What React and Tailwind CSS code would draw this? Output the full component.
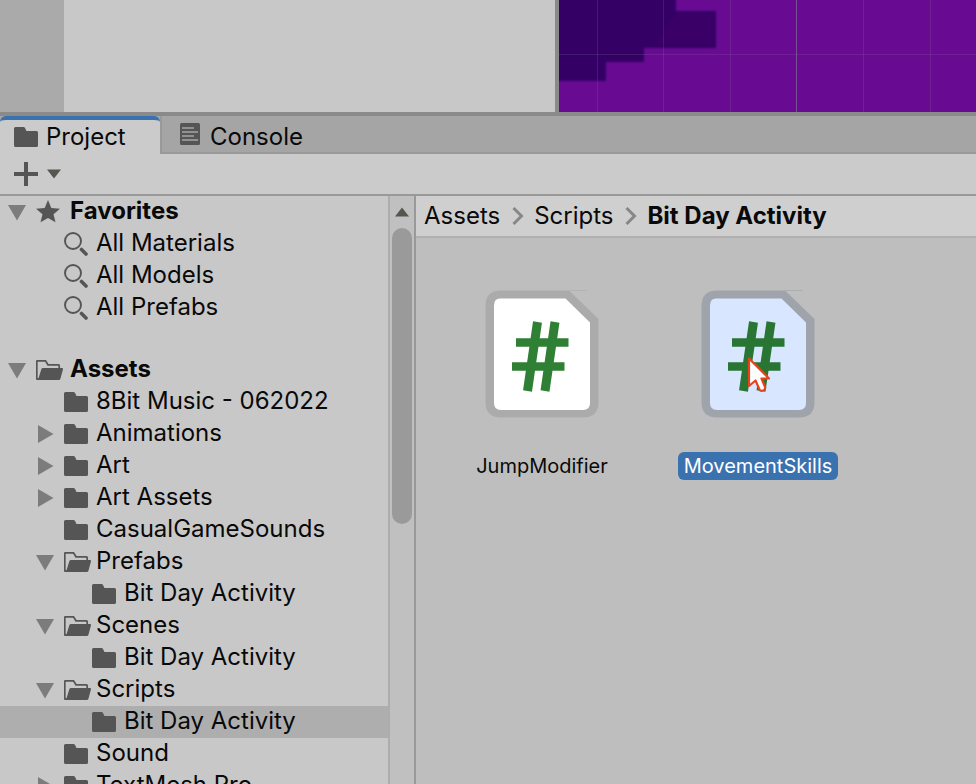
import { useState } from "react";

const FAVORITES = ["All Materials", "All Models", "All Prefabs"];

const ASSETS = [
  { name: "8Bit Music - 062022", depth: 1 },
  { name: "Animations", depth: 1, state: "closed" },
  { name: "Art", depth: 1, state: "closed" },
  { name: "Art Assets", depth: 1, state: "closed" },
  { name: "CasualGameSounds", depth: 1 },
  { name: "Prefabs", depth: 1, state: "open" },
  { name: "Bit Day Activity", depth: 2 },
  { name: "Scenes", depth: 1, state: "open" },
  { name: "Bit Day Activity", depth: 2 },
  { name: "Scripts", depth: 1, state: "open" },
  { name: "Bit Day Activity", depth: 2, selected: true },
  { name: "Sound", depth: 1 },
  { name: "TextMesh Pro", depth: 1, state: "closed" },
];

function FolderIcon() {
  return (
    <svg className="h-5 w-6 shrink-0" viewBox="0 0 24 20" fill="#555555" aria-hidden="true">
      <path d="M1.500 0H9.500Q10.500 0 11 1L12.500 4H22.500Q24 4 24 5.500V18.500Q24 20 22.500 20H1.500Q0 20 0 18.500V1.500Q0 0 1.500 0Z" />
    </svg>
  );
}

function OpenFolderIcon() {
  return (
    <svg className="h-5 w-7 shrink-0" viewBox="0 0 28 20" fill="#555555" aria-hidden="true">
      <path
        d="M23.200 8V5.500Q23.200 4.800 22.500 4.800H12L9.500 0.800H1.500Q0.800 0.800 0.800 1.500V18.500Q0.800 19.200 1.500 19.200H3"
        fill="none"
        stroke="#555555"
        strokeWidth="1.700"
      />
      <path d="M7 8H26Q27.300 8 27 9.200L24.500 18.500Q24.100 20 22.600 20H2L5.300 9.200Q5.700 8 7 8Z" />
    </svg>
  );
}

function SearchIcon() {
  return (
    <svg className="h-6 w-6 shrink-0" viewBox="0 0 24 24" fill="none" stroke="#555555" aria-hidden="true">
      <circle cx="9" cy="9" r="8" strokeWidth="1.900" />
      <path d="M17.500 17.500L22 22" strokeWidth="3.600" strokeLinecap="round" />
    </svg>
  );
}

function StarIcon() {
  return (
    <svg className="h-6 w-6 shrink-0" viewBox="0 0 24 24" fill="#555555" aria-hidden="true">
      <path d="M12 0L15.300 8L24 8.800L17.500 14.200L19.500 22.200L12 18L4.500 22.200L6.500 14.200L0 8.800L8.700 8Z" />
    </svg>
  );
}

function Arrow({ state }) {
  return (
    <svg className="h-5 w-5 shrink-0" viewBox="0 0 20 20" fill="#7c7c7c" aria-hidden="true">
      {state === "open" && <path d="M1 3H19L10 18.500Z" />}
      {state === "closed" && <path d="M3 1L18.500 10L3 19Z" />}
    </svg>
  );
}

function Toggle({ state, label }) {
  if (!state) return <span className="w-5 shrink-0" />;
  return (
    <button type="button" aria-label={label} aria-expanded={state === "open"} className="shrink-0">
      <Arrow state={state} />
    </button>
  );
}

function TreeRow({ name, depth, state, selected, icon, bold }) {
  const indent = depth === 0 ? "pl-[7px]" : depth === 1 ? "pl-[35px]" : "pl-[63px]";
  return (
    <li
      className={`flex h-8 shrink-0 items-center ${indent} ${selected ? "bg-[#aeaeae]" : ""}`}
    >
      <Toggle state={state} label={`Toggle ${name}`} />
      <span className="ml-[9px] flex w-8 shrink-0 items-center">{icon}</span>
      <button
        type="button"
        className={`pb-[2px] text-2xl leading-[30px] whitespace-nowrap ${bold ? "ml-[2px] font-bold" : ""}`}
      >
        {name}
      </button>
    </li>
  );
}

function SceneView() {
  return (
    <svg
      className="h-full w-full"
      viewBox="0 0 417 112"
      preserveAspectRatio="xMinYMin slice"
      role="img"
      aria-label="Scene view"
    >
      <defs>
        <filter id="soft" x="-5%" y="-5%" width="110%" height="110%">
          <feGaussianBlur stdDeviation="1" />
        </filter>
      </defs>
      <rect width="417" height="112" fill="#690a93" />
      <path
        d="M-9 -9H117V11H157V48H85V62H47V81H-9Z"
        fill="#340066"
        filter="url(#soft)"
      />
      <path d="M117 14H154V44H98Z" fill="#410068" opacity="0.600" filter="url(#soft)" />
      <g stroke="#80808c" strokeOpacity="0.200">
        <path d="M38.500 0V112M104.500 0V112M171.500 0V112M304.500 0V112M371.500 0V112M0 54.500H417" />
        <path d="M237.500 0V112" strokeOpacity="0.600" />
      </g>
    </svg>
  );
}

function ScriptIcon({ selected }) {
  const frame = selected ? "#9fa4ac" : "#ababab";
  const paper = selected ? "#d8e6ff" : "#ffffff";
  const ink = selected ? "#297534" : "#2f8034";
  return (
    <svg className="h-32 w-[114px]" viewBox="0 0 114 128" aria-hidden="true">
      <path d="M16 0.500H84L113.500 29V112Q113.500 127.500 98 127.500H16Q0.500 127.500 0.500 112V16Q0.500 0.500 16 0.500Z" fill={frame} />
      <path d="M84 0.500H102" stroke={frame} strokeOpacity="0.600" />
      <path d="M15 8.500H80.500L105 32.500V113Q105 120 98 120H16Q9 120 9 113V15.500Q9 8.500 15 8.500Z" fill={paper} />
      <g stroke={ink} fill="none">
        <path d="M52.500 32L42.500 101M70 32L60 101" strokeWidth="9" />
        <path d="M31 52.500H83.500M27 76.500H79.500" strokeWidth="8.500" />
      </g>
    </svg>
  );
}

function Cursor() {
  return (
    <svg className="absolute top-[65px] left-[45px] h-10 w-7" viewBox="0 0 28 40" aria-hidden="true">
      <path
        d="M3 3.500V31L9.500 25.500L13.500 34.500Q14.500 36.500 17 35.500Q19.800 34.500 19 32L15.500 23.500H23Z"
        fill="#ffffff"
        stroke="#e8421c"
        strokeWidth="2.200"
        strokeLinejoin="round"
      />
    </svg>
  );
}

function Chevron() {
  return (
    <svg className="h-5 w-3 shrink-0" viewBox="0 0 12 20" fill="none" stroke="#878787" strokeWidth="3" aria-hidden="true">
      <path d="M1.500 2L9.500 10L1.500 18" />
    </svg>
  );
}

function ScriptTile({ name, selected, onSelect, children }) {
  return (
    <button type="button" onClick={onSelect} className="flex w-[216px] flex-col items-center">
      <span className="relative flex">
        <ScriptIcon selected={selected} />
        {children}
      </span>
      <span
        className={`mt-[34px] rounded-md px-1.5 text-xl leading-7 ${selected ? "bg-[#3a72b0] text-white" : ""}`}
      >
        {name}
      </span>
    </button>
  );
}

export default function App() {
  const [picked, setPicked] = useState("MovementSkills");
  return (
    <div className="flex h-screen flex-col overflow-hidden bg-[#bebebe] font-['Inter','Liberation_Sans',sans-serif] text-[#090909]">
      <section className="flex h-[116px] shrink-0 border-b-4 border-[#8a8a8a]">
        <div className="w-16 shrink-0 bg-[#aaaaaa]" />
        <div className="w-[495px] shrink-0 border-r-4 border-[#8a8a8a] bg-[#c8c8c8]" />
        <div className="min-w-0 flex-1">
          <SceneView />
        </div>
      </section>

      <nav className="flex h-[38px] shrink-0 bg-[#a5a5a5] text-2xl">
        <button
          type="button"
          className="flex w-40 shrink-0 items-center gap-2 rounded-t-md border-t-4 border-[#3a72b0] bg-[#cbcbcb] pl-3.5"
        >
          <FolderIcon />
          Project
        </button>
        <button
          type="button"
          className="flex flex-1 items-center gap-2.5 border-b-2 border-l-2 border-[#999999] pt-1 pl-[18px]"
        >
          <svg className="mb-1 h-[22px] w-5 shrink-0" viewBox="0 0 20 22" aria-hidden="true">
            <rect width="20" height="22" rx="1.500" fill="#555555" />
            <path d="M2 5H14M2 9H18M2 13H14M2 17H18" stroke="#a5a5a5" strokeWidth="1.700" />
          </svg>
          <span className="pt-0.5">Console</span>
        </button>
      </nav>

      <div className="flex h-[42px] shrink-0 items-center border-b-2 border-[#999999] bg-[#cbcbcb] pl-3.5">
        <button type="button" aria-label="Create" className="flex items-center gap-[9px]">
          <svg className="h-6 w-6" viewBox="0 0 24 24" aria-hidden="true">
            <path d="M12 0V24M0 12H24" stroke="#555555" strokeWidth="4" />
          </svg>
          <svg className="h-2.5 w-3.5" viewBox="0 0 14 10" fill="#55564e" aria-hidden="true">
            <path d="M0 0.500H14L7 9.500Z" />
          </svg>
        </button>
      </div>

      <main className="flex min-h-0 flex-1">
        <ul className="flex w-[388px] shrink-0 flex-col overflow-hidden bg-[#c8c8c8]">
          <TreeRow name="Favorites" depth={0} state="open" bold icon={<StarIcon />} />
          {FAVORITES.map((name) => (
            <TreeRow key={name} name={name} depth={1} icon={<SearchIcon />} />
          ))}
          <li className="h-[30px] shrink-0" aria-hidden="true" />
          <TreeRow name="Assets" depth={0} state="open" bold icon={<OpenFolderIcon />} />
          {ASSETS.map((item, i) => (
            <TreeRow key={i} {...item} icon={item.state === "open" ? <OpenFolderIcon /> : <FolderIcon />} />
          ))}
        </ul>

        <div className="flex w-7 shrink-0 flex-col items-center border-x-2 border-l-[#adadad] border-r-[#999999] bg-[#c0c0c0]">
          <button type="button" aria-label="Scroll up" className="flex h-8 shrink-0 items-center">
            <svg className="h-2.5 w-3.5" viewBox="0 0 14 10" fill="#55564e" aria-hidden="true">
              <path d="M0 9.500H14L7 0.500Z" />
            </svg>
          </button>
          <div className="h-[296px] w-5 shrink-0 rounded-full bg-[#9a9a9a]" />
        </div>

        <section className="flex min-w-0 flex-1 flex-col">
          <div className="flex h-[42px] shrink-0 items-center border-b-2 border-[#b0b0b0] bg-[#cfcfcf] pl-2 text-2xl whitespace-nowrap">
            <button type="button">Assets</button>
            <span className="mr-2.5 ml-3 flex">
              <Chevron />
            </span>
            <button type="button">Scripts</button>
            <span className="mr-2.5 ml-3 flex">
              <Chevron />
            </span>
            <button type="button" className="font-bold">
              Bit Day Activity
            </button>
          </div>
          <div className="flex flex-wrap pt-[52px] pl-[18px]">
            <ScriptTile
              name="JumpModifier"
              selected={picked === "JumpModifier"}
              onSelect={() => setPicked("JumpModifier")}
            />
            <ScriptTile
              name="MovementSkills"
              selected={picked === "MovementSkills"}
              onSelect={() => setPicked("MovementSkills")}
            >
              <Cursor />
            </ScriptTile>
          </div>
        </section>
      </main>
    </div>
  );
}
